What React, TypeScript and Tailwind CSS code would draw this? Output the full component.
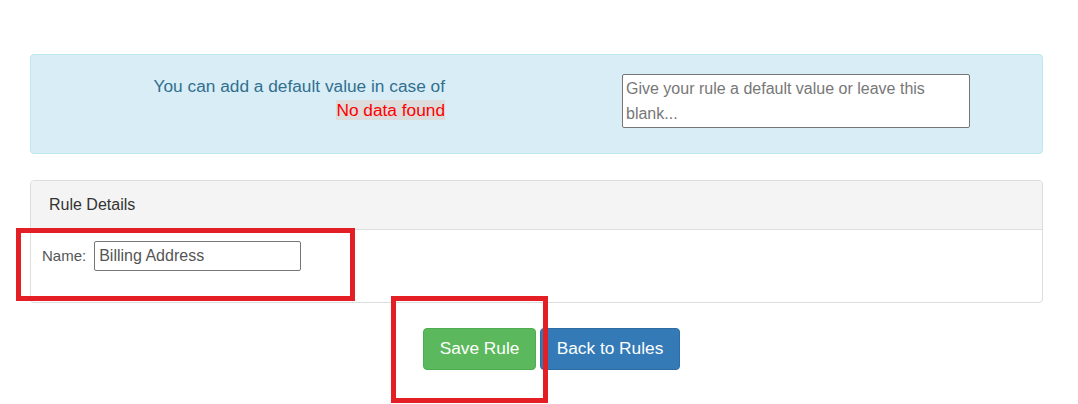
export default function App() {
  return (
    <div className="relative h-[404px] w-[1078px] overflow-hidden bg-white font-['Liberation_Sans',Arial,sans-serif]">
      <div className="ml-[30px] w-[1013px] pt-[54px]">
        {/* Default value alert */}
        <div className="flex h-[100px] rounded-[4px] border border-[#bce8f1] bg-[#d9edf7]">
          <div className="w-[414px] pt-[19px] text-right text-[17.3px] leading-[24px] text-[#31708f]">
            <div>You can add a default value in case of</div>
            <span className="bg-[#dcdcdc] text-[#ff0000]">No data found</span>
          </div>
          <textarea
            className="ml-[177px] mt-[19px] h-[54px] w-[348px] resize-none overflow-hidden rounded-[2px] border border-[#767676] bg-white px-[3px] py-[1px] text-[16px] leading-[25px] text-[#555] placeholder:text-[#777777] outline-none"
            placeholder="Give your rule a default value or leave this blank..."
          />
        </div>

        {/* Rule details panel */}
        <div className="mt-[26px] rounded-[4px] border border-[#dddddd] bg-white">
          <div className="flex h-[49px] items-center rounded-t-[4px] border-b border-[#dddddd] bg-[#f4f4f4] pl-[18px] text-[16px] text-[#333]">
            Rule Details
          </div>
          <div className="flex h-[72px] items-start gap-[8px] pl-[11px] pt-[11px]">
            <label className="text-[15px] leading-[30px] text-[#555]">Name:</label>
            <input
              className="h-[30px] w-[207px] rounded-[2px] border border-[#767676] px-[4px] text-[16px] text-[#555] outline-none"
              defaultValue="Billing Address"
            />
          </div>
        </div>

        {/* Actions */}
        <div className="mt-[25px] flex gap-[4px] pl-[393px]">
          <button className="flex h-[42px] w-[113px] items-center justify-center rounded-[4px] border border-[#4cae4c] bg-[#5cb85c] text-[17.3px] text-white">
            Save Rule
          </button>
          <button className="flex h-[42px] w-[140px] items-center justify-center rounded-[4px] border border-[#2e6da4] bg-[#337ab7] text-[17.3px] text-white">
            Back to Rules
          </button>
        </div>
      </div>

      {/* annotation boxes */}
      <div className="absolute left-[16px] top-[228px] h-[73px] w-[339px] border-[5px] border-[#e41e25]" />
      <div className="absolute left-[391px] top-[296px] h-[107px] w-[157px] border-[5px] border-[#e41e25]" />
    </div>
  );
}
